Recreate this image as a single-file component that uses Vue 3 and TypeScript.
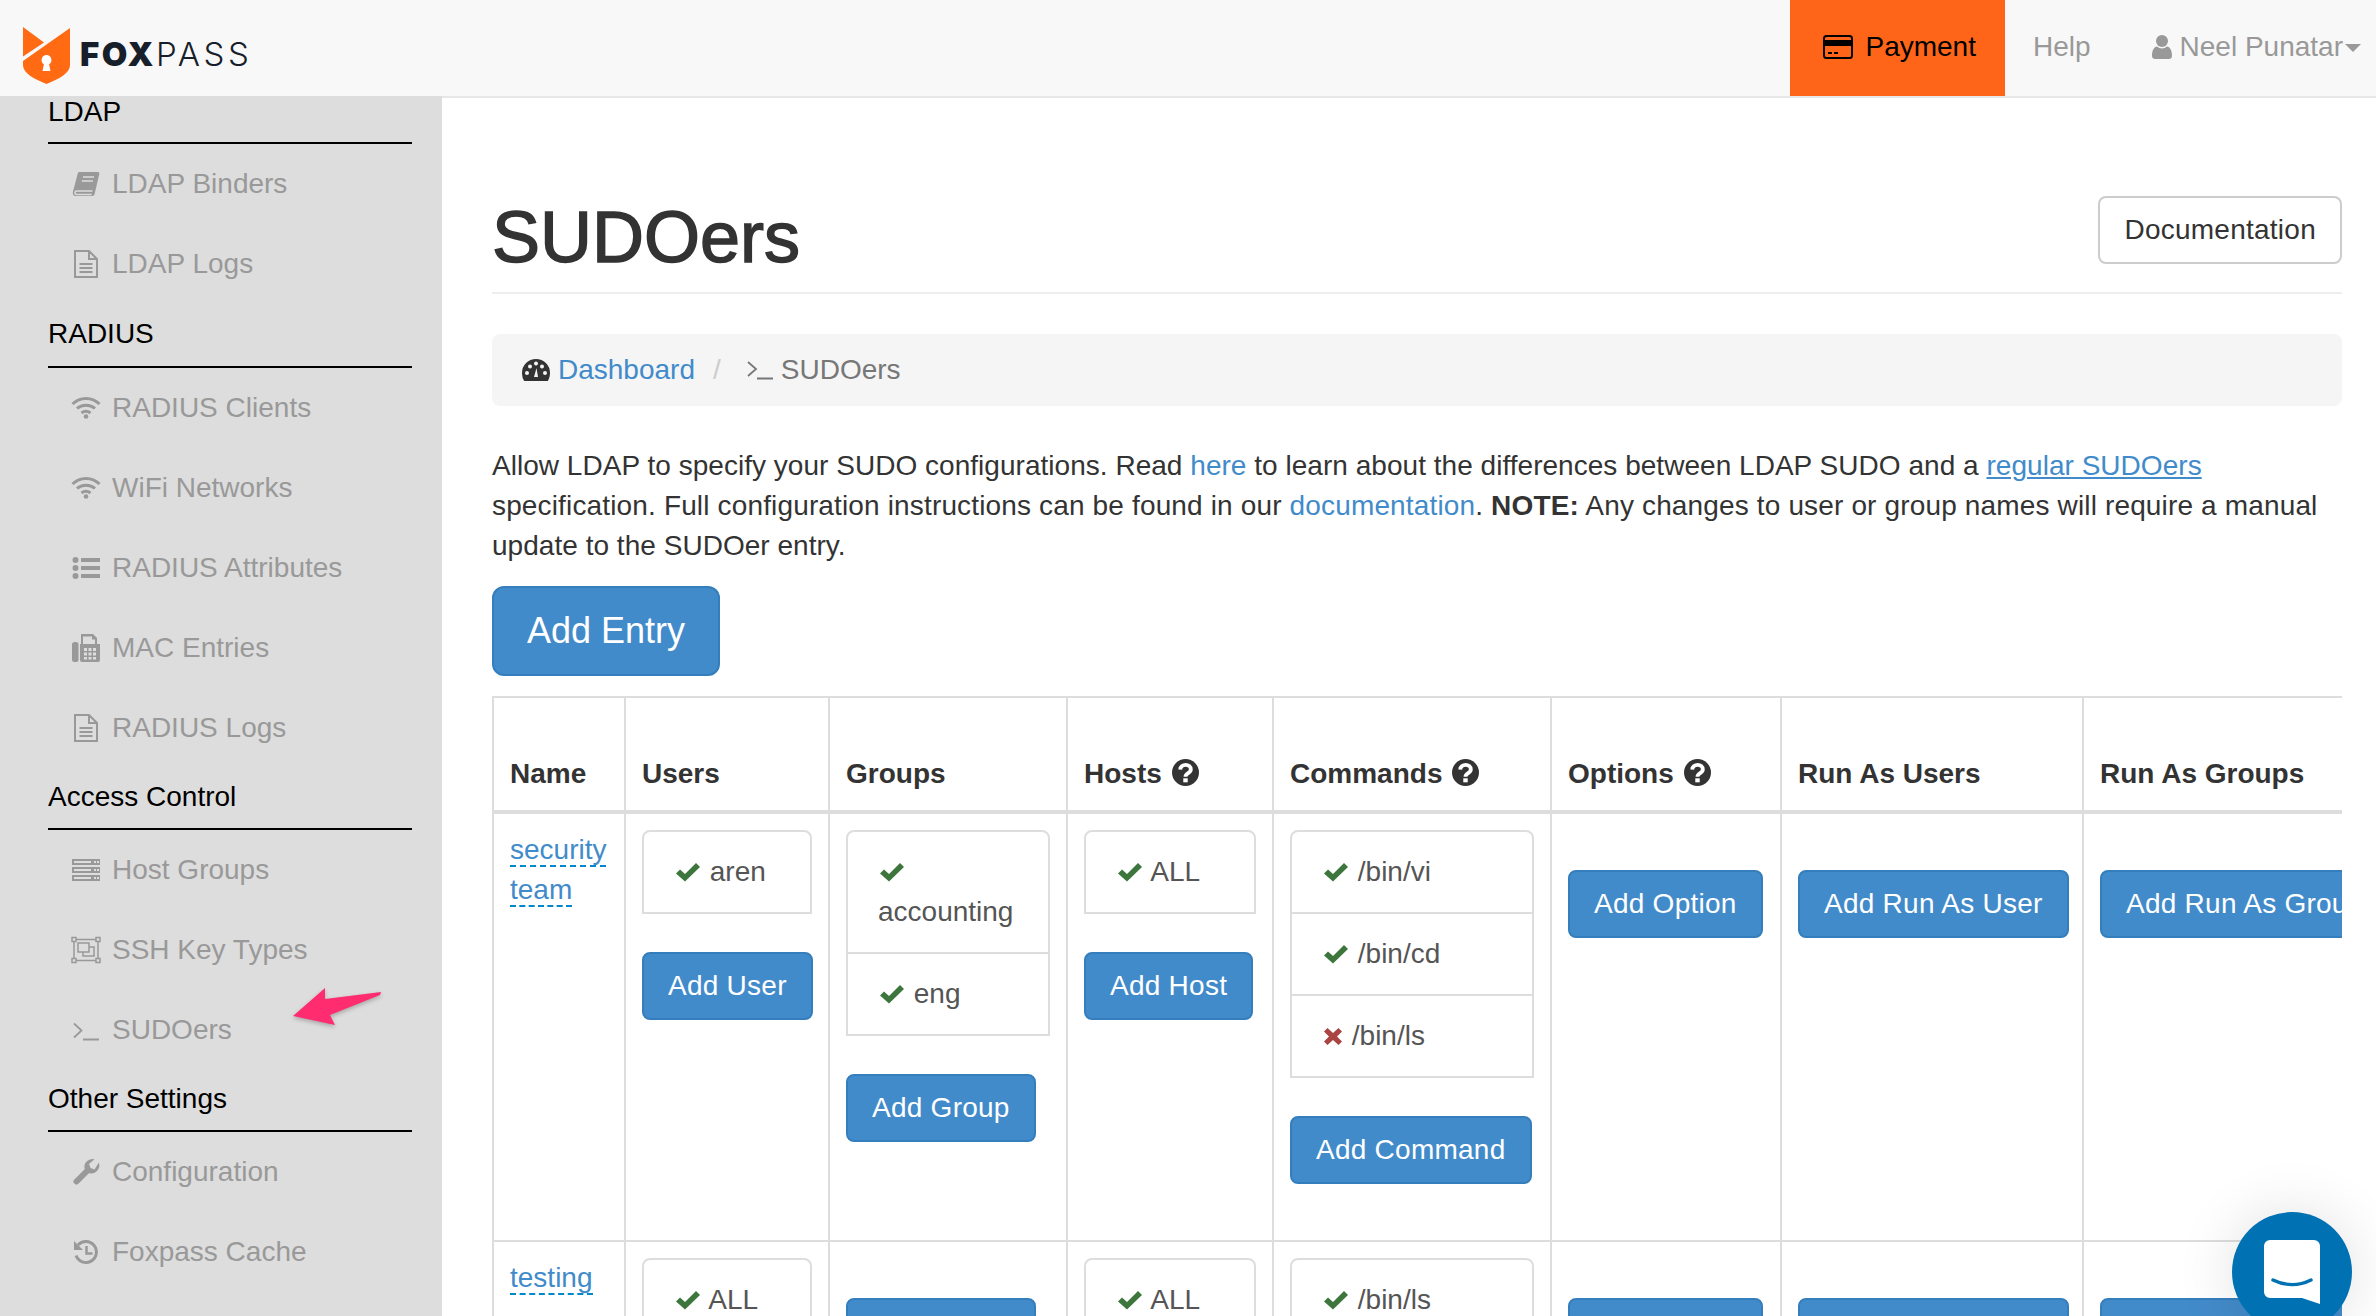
<script setup lang="ts">
interface NavItem { icon: string; label: string }
interface NavSection { title: string; items: NavItem[] }
interface Entry { text: string; ok: boolean }
interface Row {
  name: string
  users: Entry[]
  groups: Entry[]
  hosts: Entry[]
  commands: Entry[]
}

const icons: Record<string, string> = {
  book: '<path fill="currentColor" d="M8 3h19c1.200 0 1.600 1 1.200 2.500L23.600 25c-.5 1.500-1.400 2-3 2H5c-2.600 0-3.700-2-3.100-4L6.600 5C6.900 3.800 7.300 3 8 3z"/><path fill="none" stroke="#ddd" stroke-width="1.500" d="M12 8h11M10.800 12h11M21.500 22H6c-2.600 0-2.600 3.500-.3 3.500h15"/>',
  file: '<path fill="none" stroke="currentColor" stroke-width="2" d="M4 2h14l8 8v18H4zM18 2v8h8M8.500 15h13M8.500 19h13M8.500 23h13"/>',
  wifi: '<g fill="none" stroke="currentColor" stroke-width="3"><path d="M1.500 11C9 3.500 21 3.500 28.500 11"/><path d="M6 15.500c5-4.500 13-4.500 18 0"/><path d="M10.500 20c3-2.300 6-2.300 9 0"/></g><circle cx="15" cy="23.500" r="2.300" fill="currentColor"/>',
  list: '<g fill="currentColor"><circle cx="4.500" cy="7" r="3"/><circle cx="4.500" cy="15" r="3"/><circle cx="4.500" cy="23" r="3"/><rect x="10" y="5" width="19" height="4"/><rect x="10" y="13" width="19" height="4"/><rect x="10" y="21" width="19" height="4"/></g>',
  fax: '<g fill="currentColor"><rect x="1" y="9" width="6.500" height="20" rx="2.500"/><path d="M10 1h12l4 4v6h3v16a2 2 0 0 1-2 2H11a2 2 0 0 1-2-2V11h1z"/></g><path fill="#ddd" d="M12 3.500h9v3h3v4.500H12zM13 15h3v3h-3zM17.500 15h3v3h-3zM22 15h3v3h-3zM13 19.500h3v3h-3zM17.500 19.500h3v3h-3zM22 19.500h3v3h-3zM13 24h3v2.500h-3zM17.500 24h3v2.500h-3zM22 24h3v2.500h-3z"/>',
  server: '<g fill="currentColor"><rect x="1" y="4" width="28" height="6"/><rect x="1" y="12" width="28" height="6"/><rect x="1" y="20" width="28" height="6"/></g><path fill="#ddd" d="M3 6h17v2H3zM23 6h2v2h-2zM26 6h2v2h-2zM3 14h17v2H3zM23 14h2v2h-2zM26 14h2v2h-2zM3 22h17v2H3zM23 22h2v2h-2zM26 22h2v2h-2z"/>',
  group: '<g fill="none" stroke="currentColor" stroke-width="1.500"><rect x="1" y="2.500" width="4" height="4"/><rect x="25" y="2.500" width="4" height="4"/><rect x="1" y="23.500" width="4" height="4"/><rect x="25" y="23.500" width="4" height="4"/><path d="M5 4.500h20M5 25.500h20M3 6.500v17M27 6.500v17"/><rect x="7" y="8" width="11" height="9"/><path d="M18 12h5v9H12v-4"/></g>',
  terminal: '<path fill="none" stroke="currentColor" stroke-width="1.800" d="M3 8.500L10.500 15.500 3 22.500M12 24.500h16"/>',
  wrench: '<path fill="none" stroke="currentColor" stroke-width="6" stroke-linecap="round" d="M5.500 24.500L15 15"/><path fill="currentColor" d="M27.800 5.500a8 8 0 0 1-11 10l-3-3a8 8 0 0 1 9.700-10.200L18 7l1.500 4 4 1.500z"/>',
  history: '<g fill="none" stroke="currentColor" stroke-width="3"><path d="M7 8a10.500 10.500 0 1 1-2 10.500"/><path stroke-width="2.500" d="M15.500 9v7.500h6"/></g><path fill="currentColor" d="M3 4v9h9z"/>',
}

const sections: NavSection[] = [
  { title: 'LDAP', items: [{ icon: 'book', label: 'LDAP Binders' }, { icon: 'file', label: 'LDAP Logs' }] },
  {
    title: 'RADIUS',
    items: [
      { icon: 'wifi', label: 'RADIUS Clients' },
      { icon: 'wifi', label: 'WiFi Networks' },
      { icon: 'list', label: 'RADIUS Attributes' },
      { icon: 'fax', label: 'MAC Entries' },
      { icon: 'file', label: 'RADIUS Logs' },
    ],
  },
  {
    title: 'Access Control',
    items: [
      { icon: 'server', label: 'Host Groups' },
      { icon: 'group', label: 'SSH Key Types' },
      { icon: 'terminal', label: 'SUDOers' },
    ],
  },
  { title: 'Other Settings', items: [{ icon: 'wrench', label: 'Configuration' }, { icon: 'history', label: 'Foxpass Cache' }] },
]

const rows: Row[] = [
  {
    name: 'security team',
    users: [{ text: 'aren', ok: true }],
    groups: [{ text: 'accounting', ok: true }, { text: 'eng', ok: true }],
    hosts: [{ text: 'ALL', ok: true }],
    commands: [{ text: '/bin/vi', ok: true }, { text: '/bin/cd', ok: true }, { text: '/bin/ls', ok: false }],
  },
  {
    name: 'testing',
    users: [{ text: 'ALL', ok: true }],
    groups: [],
    hosts: [{ text: 'ALL', ok: true }],
    commands: [{ text: '/bin/ls', ok: true }],
  },
]

const columns: { key: 'users' | 'groups' | 'hosts' | 'commands'; add: string }[] = [
  { key: 'users', add: 'Add User' },
  { key: 'groups', add: 'Add Group' },
  { key: 'hosts', add: 'Add Host' },
  { key: 'commands', add: 'Add Command' },
]

const extras = ['Add Option', 'Add Run As User', 'Add Run As Group']
const headers = [
  { label: 'Name', help: false },
  { label: 'Users', help: false },
  { label: 'Groups', help: false },
  { label: 'Hosts', help: true },
  { label: 'Commands', help: true },
  { label: 'Options', help: true },
  { label: 'Run As Users', help: false },
  { label: 'Run As Groups', help: false },
]
</script>

<template>
  <div class="page">
    <header class="topbar">
      <div class="logo">
        <svg class="shield" viewBox="0 0 47 57" width="47" height="57">
          <path fill="#ff6a13" d="M0 0L21 15.500 0 29.500zM47 1V38C47 46 36 52 23.500 57 11 52 0 46 0 38V34z" />
          <path fill="#fff" d="M23.500 28a5 5 0 0 1 2.600 9.200L27.500 44h-8l1.400-6.800A5 5 0 0 1 23.500 28z" />
        </svg>
        <span class="wordmark"><b>FOX</b><span>PASS</span></span>
      </div>
      <nav class="topnav">
        <a class="pay">
          <svg viewBox="0 0 30 24" width="30" height="24">
            <rect x="1" y="1" width="28" height="22" rx="2.500" fill="none" stroke="#000" stroke-width="2" />
            <rect x="1" y="5" width="28" height="6" fill="#000" />
            <path d="M5 18h4M11 18h4" stroke="#000" stroke-width="2" />
          </svg>
          Payment
        </a>
        <a class="plain help">Help</a>
        <a class="plain user">
          <svg viewBox="0 0 20 24" width="20" height="24">
            <circle cx="10" cy="6" r="6" fill="#999" />
            <path fill="#999" d="M0 21c0-6 2-9 5-9.500 3 2.500 7 2.500 10 0 3 .5 5 3.500 5 9.500 0 2-1.500 3-3 3H3c-1.500 0-3-1-3-3z" />
          </svg>
          Neel Punatar<i class="caret"></i>
        </a>
      </nav>
    </header>

    <div class="shell">
      <aside class="sidebar">
        <div class="sidebar-inner">
          <section v-for="s in sections" :key="s.title">
            <h4 class="side-title">{{ s.title }}</h4>
            <a v-for="item in s.items" :key="item.label" class="side-item">
              <svg class="side-icon" viewBox="0 0 30 30" width="30" height="30" v-html="icons[item.icon]"></svg>
              {{ item.label }}
            </a>
          </section>
        </div>
        <svg class="arrow" viewBox="0 0 100 50" width="100" height="50">
          <path fill="#ff2d6f" d="M3 31L35 3V14L91 7 90 10 40 30 45 40z" />
        </svg>
      </aside>

      <main class="main">
        <div class="title-row">
          <h1>SUDOers</h1>
          <a class="doc-btn">Documentation</a>
        </div>

        <div class="crumb">
          <svg viewBox="0 0 28 22" width="28" height="22" class="gauge">
            <path fill="#333" d="M14 0a14 14 0 0 1 14 14c0 3-.8 5.600-2.200 8H2.200A14.500 14.500 0 0 1 0 14 14 14 0 0 1 14 0z" />
            <g fill="#f5f5f5">
              <circle cx="5" cy="14" r="2" />
              <circle cx="8" cy="7.500" r="2" />
              <circle cx="14" cy="4.500" r="2" />
              <circle cx="20" cy="7.500" r="2" />
              <circle cx="23" cy="14" r="2" />
              <path d="M14.500 9l1.500 9h-4z" />
            </g>
          </svg>
          <a class="link">Dashboard</a>
          <span class="sep">/</span>
          <svg viewBox="0 0 26 20" width="26" height="20" class="term">
            <path fill="none" stroke="#777" stroke-width="1.800" d="M1 2l8 7-8 7M10 18.500h16" />
          </svg>
          <span class="here">SUDOers</span>
        </div>

        <p class="intro">
          Allow LDAP to specify your SUDO configurations. Read <a class="link">here</a> to learn about the differences
          between LDAP SUDO and a <a class="link under">regular SUDOers</a>
          <span class="line-two"> specification. Full configuration
          instructions can be found in our <a class="link">documentation</a>. <b>NOTE:</b> Any changes to user or group
          names will require a manual</span> update to the SUDOer entry.
        </p>

        <a class="btn btn-lg">Add Entry</a>

        <div class="table-wrap">
          <table>
            <colgroup>
              <col class="w1" /><col class="w2" /><col class="w3" /><col class="w4" />
              <col class="w5" /><col class="w6" /><col class="w7" /><col class="w8" />
            </colgroup>
            <thead>
              <tr>
                <th v-for="h in headers" :key="h.label">
                  {{ h.label }}
                  <svg v-if="h.help" class="help-icon" viewBox="0 0 28 28" width="27" height="27">
                    <circle cx="14" cy="14" r="14" fill="#333" />
                    <path fill="none" stroke="#fff" stroke-width="4" d="M8.500 11c.5-6.500 11-6.500 11 0 0 4-5.500 3.500-5.500 7.500" />
                    <rect x="11.700" y="20" width="4.600" height="4.200" fill="#fff" />
                  </svg>
                </th>
              </tr>
            </thead>
            <tbody>
              <tr v-for="r in rows" :key="r.name">
                <td><a class="entry-name">{{ r.name }}</a></td>
                <td v-for="c in columns" :key="c.key">
                  <ul v-if="r[c.key].length" class="list">
                    <li v-for="e in r[c.key]" :key="e.text">
                      <svg v-if="e.ok" class="mark" viewBox="0 0 28 28" width="28" height="28">
                        <path fill="#3c763d" d="M2 15.500l4-4 5 4.500L22 5l4 4-15 14.500z" />
                      </svg>
                      <svg v-else class="mark" viewBox="0 0 22 28" width="22" height="28">
                        <path fill="#a94442" d="M2 9.500l3.500-3.500L11 11l5.500-5 3.500 3.500-5 5 5 5-3.500 3.500-5.500-5-5.500 5L2 19.500l5-5z" />
                      </svg>
                      {{ e.text }}
                    </li>
                  </ul>
                  <a class="btn btn-add" :class="{ solo: !r[c.key].length }">{{ c.add }}</a>
                </td>
                <td v-for="x in extras" :key="x">
                  <a class="btn btn-add solo">{{ x }}</a>
                </td>
              </tr>
            </tbody>
          </table>
        </div>
      </main>
    </div>

    <div class="chat">
      <svg viewBox="0 0 56 64" width="56" height="64">
        <path fill="#fff" d="M6 0h44a6 6 0 0 1 6 6v58l-18-6H6a6 6 0 0 1-6-6V6a6 6 0 0 1 6-6z" />
        <path fill="none" stroke="#0071b2" stroke-width="3.500" stroke-linecap="round" d="M9 40c12 6 26 6 38 0" />
      </svg>
    </div>
  </div>
</template>

<style>
html, body { margin: 0; overflow: hidden; }
</style>

<style scoped>
.page {
  width: 2376px;
  height: 1316px;
  overflow: hidden;
  position: relative;
  background: #fff;
  font: 28px/40px "Liberation Sans", Arial, sans-serif;
  color: #333;
}
.topbar {
  height: 96px;
  background: #f8f8f8;
  display: flex;
  justify-content: space-between;
}
.logo { display: flex; padding: 27px 0 0 23px; align-items: flex-start; }
.wordmark {
  margin: 7px 0 0 10px;
  font: 33px/40px Inter, sans-serif;
  color: #17202a;
  letter-spacing: 2px;
}
.wordmark b { font-weight: 900; letter-spacing: 2.5px; }
.wordmark span { font-weight: 300; letter-spacing: 3.5px; }
.topnav { display: flex; padding-right: 15px; }
.topnav a { display: flex; align-items: center; height: 96px; box-sizing: border-box; padding-bottom: 3px; }
.topnav .pay { background: #ff6518; color: #000; padding: 0 29px 3px 33px; gap: 12px; }
.plain { color: #999; }
.help { margin: 0 61px 0 28px; }
.user { gap: 8px; }
.caret {
  width: 0; height: 0; margin: 3px 0 0 -6px;
  border-left: 8px solid transparent;
  border-right: 8px solid transparent;
  border-top: 8px solid #999;
}
.shell { display: flex; height: 1220px; }
.sidebar { width: 442px; flex: none; background: #ddd; position: relative; overflow: hidden; }
.sidebar-inner { margin-top: -13px; padding: 0 30px 0 48px; }
.side-title {
  margin: 0;
  padding: 9px 0 11px;
  font-size: 28px; line-height: 40px; font-weight: 400;
  color: #000;
  border-bottom: 2px solid #000;
}
section:nth-child(1) .side-title { padding-bottom: 10px; }
section:nth-child(2) .side-title { padding: 10px 0 12px; }
.side-item {
  display: flex; align-items: center;
  height: 80px;
  margin-left: 23px;
  gap: 11px;
  color: #999;
}
.side-icon { flex: none; }
.arrow { position: absolute; left: 290px; top: 889px; filter: drop-shadow(0 2px 2px rgba(0,0,0,.25)); }
.main { flex: 1; min-width: 0; border-top: 2px solid #e7e7e7; padding: 99px 34px 0 50px; }
.title-row {
  display: flex; justify-content: space-between; align-items: flex-start;
  padding-bottom: 15px;
  border-bottom: 2px solid #eee;
}
h1 { margin: 0; font-size: 72px; line-height: 80px; font-weight: 400; -webkit-text-stroke: 1.5px #333; color: #333; }
.doc-btn {
  margin-top: -1px;
  padding: 12px 24px;
  border: 2px solid #ccc; border-radius: 8px;
  color: #333;
  letter-spacing: 0.25px;
}
.crumb {
  margin-top: 40px;
  padding: 16px 30px;
  background: #f5f5f5; border-radius: 8px;
  display: flex; align-items: center;
}
.gauge { margin-right: 8px; }
.link { color: #428bca; }
.under { text-decoration: underline; }
.sep { color: #ccc; margin: 0 26px 0 18px; }
.term { margin-right: 8px; }
.here { color: #777; }
.intro { margin: 40px 0 20px; letter-spacing: 0.03px; }
.line-two { letter-spacing: 0.15px; }
.btn {
  display: block; width: fit-content;
  background: #428bca;
  border: 2px solid #357ebd;
  color: #fff;
  white-space: nowrap;
}
.btn-lg { font-size: 36px; line-height: 46px; padding: 20px 33px; border-radius: 12px; }
.btn-add { padding: 12px 24px; border-radius: 8px; margin-bottom: 40px; letter-spacing: 0.25px; }
.btn-add.solo { margin-top: 40px; }
.table-wrap { margin-top: 20px; overflow: hidden; }
table { border-collapse: collapse; table-layout: fixed; width: 2189px; }
.w1 { width: 132px; } .w2 { width: 204px; } .w3 { width: 238px; } .w4 { width: 206px; }
.w5 { width: 278px; } .w6 { width: 230px; } .w7 { width: 302px; } .w8 { width: 599px; }
th, td { border: 2px solid #ddd; padding: 16px; vertical-align: top; text-align: left; }
th { vertical-align: bottom; height: 80px; border-bottom-width: 4px; font-weight: 700; color: #333; white-space: nowrap; }
.help-icon { vertical-align: -3px; margin-left: 2px; }
.entry-name { color: #428bca; border-bottom: 2px dashed #0088cc; }
.list { list-style: none; margin: 0 0 38px; padding: 0; color: #555; }
.list li { border: 2px solid #ddd; padding: 20px 30px; margin-bottom: -2px; }
.list li:first-child { border-radius: 8px 8px 0 0; }
.list li:last-child { margin-bottom: 0; }
.mark { vertical-align: -5px; }
.chat {
  position: absolute; right: 24px; bottom: -16px;
  width: 120px; height: 120px; border-radius: 50%;
  background: #0071b2;
  box-shadow: 0 0 60px rgba(0,0,0,.12);
  display: flex; align-items: center; justify-content: center;
}
</style>
